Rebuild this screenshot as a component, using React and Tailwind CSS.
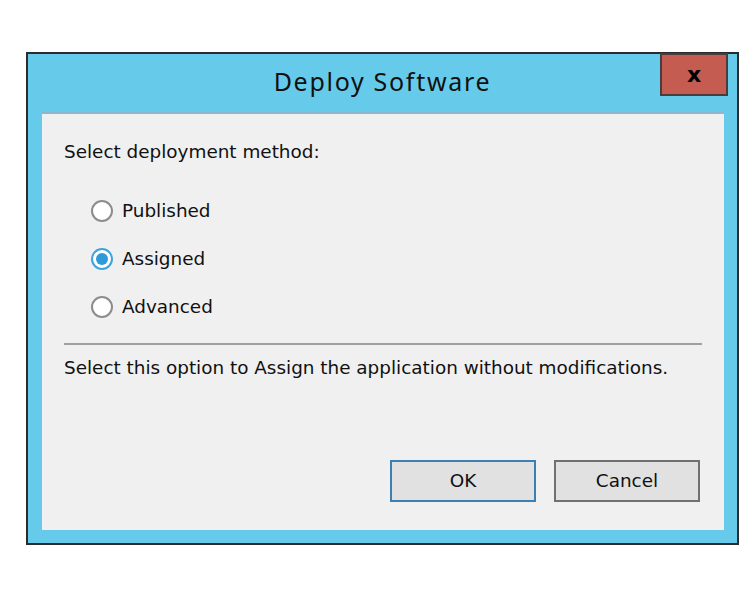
import React, { useState } from 'react';

const options = ['Published', 'Assigned', 'Advanced'];

const Radio = ({ checked }) => (
  <span
    className={`flex h-[22px] w-[22px] shrink-0 items-center justify-center rounded-full border-2 bg-white ${
      checked ? 'border-[#3ea3dd]' : 'border-[#8c8c8c]'
    }`}
  >
    {checked && <span className="h-[12px] w-[12px] rounded-full bg-[#2f9ad8]" />}
  </span>
);

export default function App() {
  const [method, setMethod] = useState('Assigned');

  return (
    <div className="min-h-[609px] bg-white pl-[26px] pt-[52px]" style={{ fontFamily: '"DejaVu Sans", Verdana, sans-serif' }}>
      <div className="relative flex h-[493px] w-[713px] flex-col border-2 border-[#2b2b2b] bg-[#66cbea]">
        {/* title bar */}
        <div className="flex h-[58px] shrink-0 items-center justify-center pb-[2px]">
          <span className="text-[25px] tracking-[1.7px] text-[#111]" style={{ fontFamily: '"Noto Sans", "Open Sans", sans-serif' }}>
            Deploy Software
          </span>
        </div>
        <button className="absolute right-[9px] top-[-1px] flex h-[43px] w-[68px] items-center justify-center border-2 border-[#4a3c3a] bg-[#c45c52] text-[22px] font-black leading-none text-black">
          x
        </button>

        {/* body */}
        <div className="mb-[13px] ml-[14px] mr-[13px] flex flex-1 flex-col border-t-2 border-[#8fb6cc] bg-[#f0f0f0] px-[22px] text-[18.4px] text-[#111]">
          <div className="mt-[26px] leading-[24px]">Select deployment method:</div>

          <div className="mt-[35px] flex flex-col gap-[24px] pl-[27px]">
            {options.map((o) => (
              <label key={o} className="flex h-[24px] cursor-default items-center gap-[9px]" onClick={() => setMethod(o)}>
                <Radio checked={method === o} />
                <span className="leading-[24px]">{o}</span>
              </label>
            ))}
          </div>

          <div className="mt-[24px] h-[2px] w-[638px] bg-[#a0a0a0]" />

          <div className="mt-[11px] leading-[24px]">
            Select this option to Assign the application without modifications.
          </div>

          <div className="mt-auto mb-[28px] flex justify-end gap-[18px] pr-[2px]">
            <button className="h-[42px] w-[146px] border-2 border-[#3c7fb1] bg-[#e1e1e1] text-[18.4px] text-[#111]">OK</button>
            <button className="h-[42px] w-[146px] border-2 border-[#707070] bg-[#e1e1e1] text-[18.4px] text-[#111]">Cancel</button>
          </div>
        </div>
      </div>
    </div>
  );
}
